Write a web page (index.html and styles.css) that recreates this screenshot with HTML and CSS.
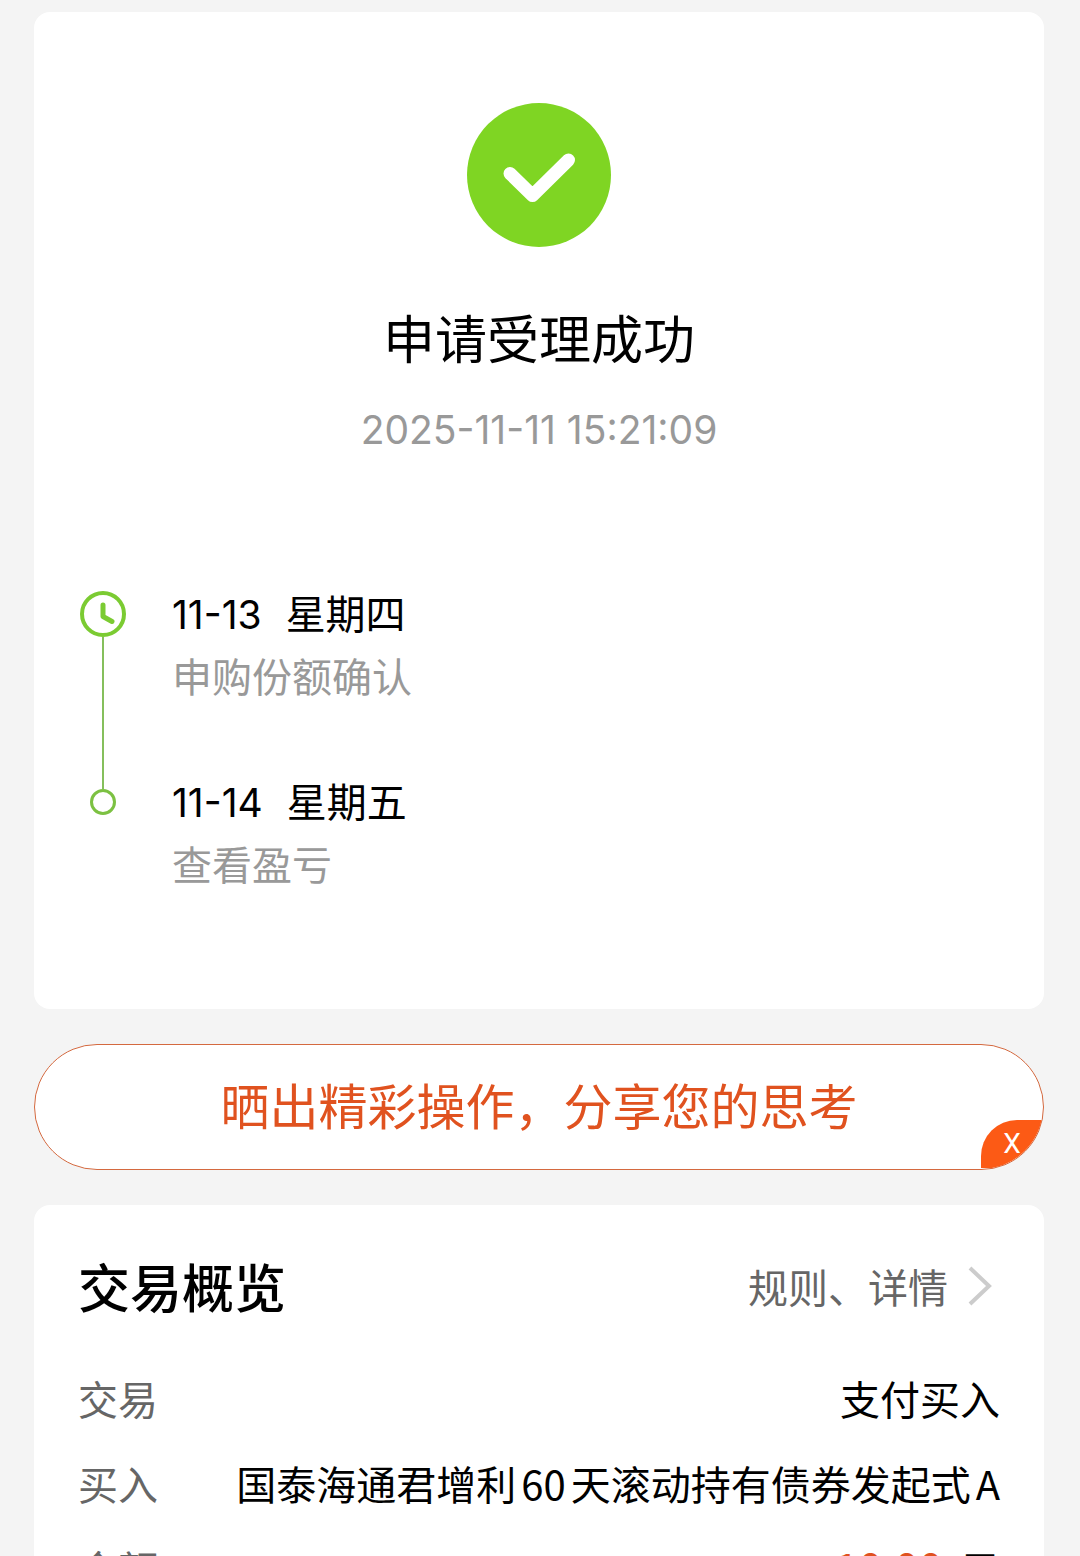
FILE: index.html
```html
<!DOCTYPE html>
<html lang="zh-CN">
<head>
  <meta charset="utf-8">
  <meta name="viewport" content="width=device-width, initial-scale=1">
  <title>申请受理成功</title>
  <link rel="stylesheet" href="styles.css">
</head>
<body>

  <main class="page">
    <section class="card result">
      <svg class="result-icon" viewBox="0 0 144 144" aria-hidden="true">
        <circle cx="72" cy="72" r="72" fill="#7fd523"/>
        <path d="M43 70.500L65.500 92.500L101.500 57" fill="none" stroke="#fff" stroke-width="13" stroke-linecap="round" stroke-linejoin="round"/>
      </svg>
      <h1>申请受理成功</h1>
      <time class="result-time" datetime="2025-11-11T15:21:09">2025-11-11 15:21:09</time>

      <ol class="timeline">
        <li class="step">
          <div class="marker">
            <svg class="clock" viewBox="0 0 46 46" aria-hidden="true">
              <circle cx="23" cy="23" r="21" fill="none" stroke="#7bcb32" stroke-width="4"/>
              <path d="M23 14V25.500L32 30.500" fill="none" stroke="#7bcb32" stroke-width="5" stroke-linecap="round" stroke-linejoin="round"/>
            </svg>
            <span class="line"></span>
          </div>
          <div class="step-text">
            <p class="step-date"><span class="day">11-13</span><span>星期四</span></p>
            <p class="step-note">申购份额确认</p>
          </div>
        </li>
        <li class="step">
          <div class="marker">
            <span class="line"></span>
            <span class="dot"></span>
          </div>
          <div class="step-text">
            <p class="step-date"><span class="day">11-14</span><span>星期五</span></p>
            <p class="step-note">查看盈亏</p>
          </div>
        </li>
      </ol>
    </section>

    <div class="share">
      <a class="share-link" href="#">晒出精彩操作，分享您的思考</a>
      <button class="share-close" type="button" aria-label="关闭">X</button>
    </div>

    <section class="card overview">
      <header class="overview-head">
        <h2>交易概览</h2>
        <a class="more" href="#">规则、详情
          <svg class="chevron" viewBox="0 0 24 40" aria-hidden="true">
            <path d="M2 2L21 20L2 38" fill="none" stroke="#ccc" stroke-width="4"/>
          </svg>
        </a>
      </header>
      <dl>
        <div class="row">
          <dt>交易</dt>
          <dd>支付买入</dd>
        </div>
        <div class="row">
          <dt>买入</dt>
          <dd>国泰海通君增利60天滚动持有债券发起式A</dd>
        </div>
        <div class="row">
          <dt>金额</dt>
          <dd><span class="amount">10.00</span>元</dd>
        </div>
      </dl>
    </section>
  </main>

</body>
</html>
```
FILE: styles.css
```css
* {
  box-sizing: border-box;
}

body {
  margin: 0;
  height: 100vh;
  overflow-x: hidden;
  overflow-y: auto;
  scrollbar-width: none;
  background-color: #f4f4f4;
  color: #000;
  font-family: "Noto Sans CJK SC", sans-serif;
  font-size: 40px;
}

h1,
h2,
p,
ol,
dl,
dd {
  margin: 0;
  padding: 0;
}

a {
  color: inherit;
  text-decoration: none;
}

.page {
  display: flex;
  flex-direction: column;
  gap: 35px;
  padding: 12px 36px 36px 34px;
}

.card {
  background-color: #fff;
  border-radius: 16px;
  padding: 44px;
}

/* result */
.result {
  display: flex;
  flex-direction: column;
  align-items: center;
  padding-top: 91px;
  padding-bottom: 114px;
}

.result-icon {
  width: 144px;
  height: 144px;
}

h1 {
  margin-top: 54px;
  font-size: 52px;
  font-weight: 400;
  line-height: 72px;
}

.result-time {
  margin-top: 27px;
  color: #999;
  font-family: Inter, sans-serif;
  font-size: 39px;
  line-height: 60px;
}

/* timeline */
.timeline {
  align-self: stretch;
  margin-top: 121px;
  list-style: none;
}

.step {
  display: flex;
  gap: 44px;
}

.step:not(:last-child) .step-text {
  padding-bottom: 62px;
}

.marker {
  display: flex;
  flex-direction: column;
  align-items: center;
  width: 50px;
}

.clock {
  flex: none;
  width: 46px;
  height: 46px;
  margin-top: 10px;
}

.line {
  flex: 1;
  width: 2px;
  background-color: #85bf5c;
}

.dot {
  width: 26px;
  height: 26px;
  border: 3px solid #7cc142;
  border-radius: 50%;
}

.marker .line:first-child {
  flex: none;
  height: 20px;
}

.step-date,
.step-note {
  height: 63px;
  line-height: 63px;
}

.step-date {
  display: flex;
  align-items: baseline;
  gap: 24px;
}

.day {
  font-family: Inter, sans-serif;
  font-size: 39px;
}

.step-note {
  color: #999;
}

/* share banner */
.share {
  position: relative;
  height: 126px;
  overflow: hidden;
  background-color: #fff;
  border: 1px solid #d4693f;
  border-radius: 63px;
}

.share-link {
  display: block;
  color: #e0521f;
  font-size: 49px;
  line-height: 118px;
  text-align: center;
}

.share-close {
  position: absolute;
  right: 0;
  bottom: 1px;
  width: 62px;
  height: 48px;
  padding: 0;
  border: none;
  border-radius: 36px 0 0 0;
  background-color: #fc5a15;
  color: #fff;
  font-family: Roboto, sans-serif;
  font-size: 28px;
  line-height: 48px;
  cursor: pointer;
}

/* overview */
.overview {
  padding-top: 45px;
}

.overview-head {
  display: flex;
  justify-content: space-between;
  align-items: center;
}

h2 {
  font-size: 52px;
  font-weight: 500;
  line-height: 72px;
}

.more {
  display: flex;
  align-items: center;
  gap: 20px;
  padding-right: 8px;
  color: #666;
  line-height: 72px;
}

.chevron {
  width: 24px;
  height: 40px;
}

dl {
  margin-top: 34px;
}

.row {
  display: flex;
  justify-content: space-between;
  height: 85px;
  line-height: 85px;
}

dt {
  color: #666;
}

dd {
  text-align: right;
  text-autospace: normal;
}

.amount {
  margin-right: 12px;
  color: #e0521f;
  font-size: 42px;
  font-weight: 500;
  line-height: 1;
}
```
